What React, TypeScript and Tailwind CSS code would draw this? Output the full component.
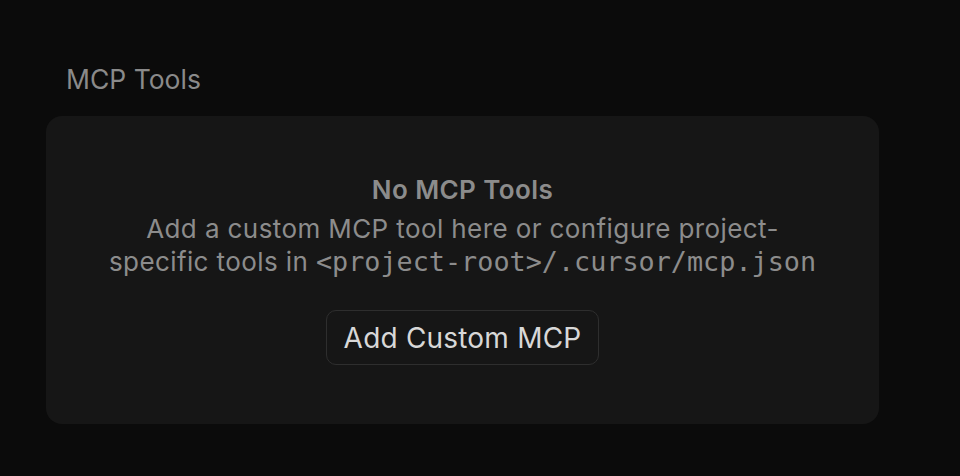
export default function App() {
  return (
    <div className="h-[476px] w-[960px] bg-[#0b0b0b] font-['Inter',sans-serif] overflow-hidden">
      <div className="pl-[46px] pt-[63px] w-[879px]">
        <h2 className="pl-[20px] text-[26.5px] leading-[32px] text-[#8a8a8a]">MCP Tools</h2>
        <div className="mt-[21px] h-[308px] rounded-[16px] bg-[#161616] flex flex-col items-center pt-[58px]">
          <div className="text-[26px] leading-[32px] font-semibold tracking-[0.4px] text-[#8c8c8c]">No MCP Tools</div>
          <p className="mt-[6px] w-[740px] text-center text-[26px] leading-[33px] tracking-[0.4px] text-[#8c8c8c]">
            Add a custom MCP tool here or configure project-
            <br />
            specific tools in{" "}
            <span className="font-['DejaVu_Sans_Mono',monospace] text-[26.8px] leading-[33px] tracking-normal">&lt;project-root&gt;/.cursor/mcp.json</span>
          </p>
          <button className="mt-[32px] h-[55px] px-[17px] rounded-[10px] border border-[#2e2e2e] text-[28px] tracking-[0.2px] text-[#d8d8d8]">
            Add Custom MCP
          </button>
        </div>
      </div>
    </div>
  )
}
